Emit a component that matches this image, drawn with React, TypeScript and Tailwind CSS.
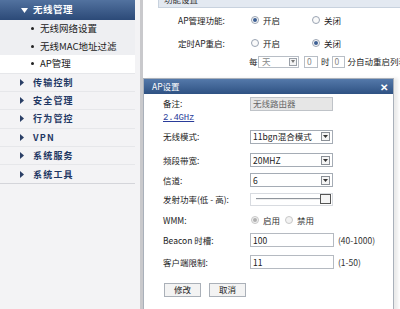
import type { ReactNode } from 'react';

const font = { fontFamily: '"Noto Sans CJK SC", "Liberation Sans", sans-serif' };

function Radio({ checked, dim }: { checked?: boolean; dim?: boolean }) {
  return (
    <span
      className={`inline-flex h-[8px] w-[8px] shrink-0 items-center justify-center rounded-full border ${
        dim ? 'border-[#c8c8c8] bg-[#f2f2f2]' : 'border-[#9aa4b2] bg-[#fafafa]'
      }`}
    >
      {checked && <span className={`h-[4px] w-[4px] rounded-full ${dim ? 'bg-[#b0b0b0]' : 'bg-[#3d5f93]'}`} />}
    </span>
  );
}

function Select({ value }: { value: string }) {
  return (
    <div className="flex h-[14px] w-[83px] items-center justify-between border border-[#a5acb5] bg-white pl-[2px] pr-[2px]">
      <span className="whitespace-nowrap text-[8.5px] leading-none text-[#222]">{value}</span>
      <span className="flex h-[9px] w-[9px] items-center justify-center border border-[#8a8f96] bg-[#f4f4f4]">
        <svg width="5" height="3" viewBox="0 0 5 3">
          <path d="M0 0h5L2.5 3z" fill="#333" />
        </svg>
      </span>
    </div>
  );
}

function Row({ label, className, children }: { label: ReactNode; className: string; children?: ReactNode }) {
  return (
    <div className={`flex h-[15px] items-center ${className}`}>
      <span className="w-[87px] shrink-0 whitespace-nowrap text-[8.5px] leading-none text-[#222]">{label}</span>
      {children}
    </div>
  );
}

const subItems = ['无线网络设置', '无线MAC地址过滤', 'AP管理'];
const menuItems = ['传输控制', '安全管理', '行为管控', 'VPN', '系统服务', '系统工具'];

export default function App() {
  return (
    <div className="relative flex h-[309px] w-[400px] overflow-hidden bg-white" style={font}>
      {/* Sidebar */}
      <aside className="flex w-[143px] shrink-0 flex-col border-r-[3px] border-[#c9c9cc] bg-[#f3f3f5] pr-[5px]">
        <div className="flex h-[20px] items-center bg-gradient-to-b from-[#52729f] to-[#2c4a78] pl-[21px]">
          <svg width="7" height="5" viewBox="0 0 7 5" className="mr-[5px]">
            <path d="M0 0h7L3.5 5z" fill="#fff" />
          </svg>
          <span className="text-[9.5px] font-bold leading-none tracking-[0.5px] text-white">无线管理</span>
        </div>
        <div className="bg-[#eeeff2]">
          {subItems.map((t, i) => (
            <div key={t} className={`flex h-[17.5px] items-center pl-[31px] ${i === 2 ? 'bg-white' : ''}`}>
              <span className="mr-[6px] h-[3px] w-[3px] rounded-full bg-[#222]" />
              <span className="whitespace-nowrap text-[9.5px] leading-none text-[#222]">{t}</span>
            </div>
          ))}
        </div>
        <div className="border-b border-[#d4d5da]">
          {menuItems.map((t) => (
            <div key={t} className="flex h-[18.4px] items-center border-t border-[#e6e7ea] pl-[20px]">
              <svg width="4" height="7" viewBox="0 0 4 7" className="mr-[9px]">
                <path d="M0 0l4 3.5L0 7z" fill="#2a3f66" />
              </svg>
              <span className="text-[9px] font-bold leading-none tracking-[1.2px] text-[#1f3864]">{t}</span>
            </div>
          ))}
        </div>
      </aside>

      {/* Main */}
      <main className="flex flex-1 flex-col">
        <div className="ml-[15px] h-[8px] overflow-hidden border-b border-l border-[#c8d2de] bg-[#e3e9f1] pl-[5px]">
          <span className="-mt-[5px] block text-[8.5px] leading-none text-[#333]">功能设置</span>
        </div>
        <div className="mt-[6px] flex h-[12px] items-center pl-[35px] text-[8.5px] leading-none text-[#222]">
          <span className="w-[73px]">AP管理功能:</span>
          <Radio checked />
          <span className="ml-[4px] w-[49px]">开启</span>
          <Radio />
          <span className="ml-[4px]">关闭</span>
        </div>
        <div className="mt-[11px] flex h-[12px] items-center pl-[35px] text-[8.5px] leading-none text-[#222]">
          <span className="w-[73px]">定时AP重启:</span>
          <Radio />
          <span className="ml-[4px] w-[49px]">开启</span>
          <Radio checked />
          <span className="ml-[4px]">关闭</span>
        </div>
        <div className="mt-[6px] flex h-[13px] items-center whitespace-nowrap pl-[106px] text-[8.5px] leading-none text-[#222]">
          <span className="mr-[1px] w-[8px]">每</span>
          <div className="flex h-[12px] w-[41px] items-center justify-between border border-[#b8bec6] bg-white pl-[3px] pr-[1px]">
            <span className="text-[#888]">天</span>
            <span className="flex h-[8px] w-[8px] items-center justify-center border border-[#9aa0a8] bg-[#f4f4f4]">
              <svg width="4" height="3" viewBox="0 0 4 3">
                <path d="M0 0h4L2 3z" fill="#777" />
              </svg>
            </span>
          </div>
          <span className="ml-[5px] flex h-[12px] w-[14px] items-center border border-[#b8bec6] pl-[2px] text-[#888]">0</span>
          <span className="ml-[3px]">时</span>
          <span className="ml-[2px] flex h-[12px] w-[13px] items-center border border-[#b8bec6] pl-[2px] text-[#888]">0</span>
          <span className="ml-[3px]">分自动重启列表</span>
        </div>
      </main>

      {/* Dialog */}
      <div className="absolute left-[143px] top-[78px] flex h-[240px] w-[251px] flex-col border border-[#a9b0ba] bg-white shadow-[4px_0_3px_rgba(0,0,0,0.08)]">
        <div className="flex h-[15px] shrink-0 items-center justify-between bg-gradient-to-b from-[#5479aa] to-[#2f5283] pl-[8px] pr-[5px]">
          <span className="text-[8.5px] leading-none text-white">AP设置</span>
          <span className="text-[10px] font-bold leading-none text-white">✕</span>
        </div>
        <div className="flex flex-col pl-[19px]">
          <Row label="备注:" className="mt-[2px]">
            <div className="flex h-[14px] w-[83px] items-center border border-[#bfc3c8] bg-[#e6e6e6] pl-[2px] text-[8.5px] leading-none text-[#666]">
              无线路由器
            </div>
          </Row>
          <div className="flex h-[14px] items-center">
            <span
              className="text-[9px] leading-none tracking-[-0.2px] text-[#2a3c9a] underline"
              style={{ fontFamily: '"Liberation Mono", monospace' }}
            >
              2.4GHz
            </span>
          </div>
          <Row label="无线模式:" className="mt-[4px]">
            <Select value="11bgn混合模式" />
          </Row>
          <Row label="频段带宽:" className="mt-[8.5px]">
            <Select value="20MHZ" />
          </Row>
          <Row label="信道:" className="mt-[5px]">
            <Select value="6" />
          </Row>
          <Row label="发射功率(低 - 高):" className="mt-[4px]">
            <div className="flex h-[13px] w-[83px] items-center border border-[#d8dbe0] bg-white pl-[5px] pr-[1px]">
              <span className="h-[2px] flex-1 border-t border-[#8f959c] bg-[#eee]" />
              <span className="h-[10px] w-[11px] border border-[#555] bg-[#f5f5f5]" />
            </div>
          </Row>
          <Row label="WMM:" className="mt-[6px]">
            <span className="ml-[1px] flex items-center text-[8.5px] leading-none text-[#333]">
              <Radio checked dim />
              <span className="ml-[4px] mr-[5px]">启用</span>
              <Radio dim />
              <span className="ml-[4px]">禁用</span>
            </span>
          </Row>
          <Row label="Beacon 时槽:" className="mt-[5px]">
            <div className="flex h-[14px] w-[84px] items-center border border-[#b5bac1] bg-white pl-[2px] text-[8.5px] leading-none text-[#222]">
              100
            </div>
            <span className="ml-[4px] text-[8.5px] leading-none text-[#333]">(40-1000)</span>
          </Row>
          <Row label="客户端限制:" className="mt-[7px]">
            <div className="flex h-[14px] w-[84px] items-center border border-[#b5bac1] bg-white pl-[2px] text-[8.5px] leading-none text-[#222]">
              11
            </div>
            <span className="ml-[4px] text-[8.5px] leading-none text-[#333]">(1-50)</span>
          </Row>
          <div className="mt-[13px] flex gap-[8px] pl-[1px]">
            <button className="flex h-[14px] w-[37px] items-center justify-center border border-[#aab0b8] bg-[#f3f3f3] text-[8.5px] leading-none text-[#222]">
              修改
            </button>
            <button className="flex h-[14px] w-[37px] items-center justify-center border border-[#aab0b8] bg-[#f3f3f3] text-[8.5px] leading-none text-[#222]">
              取消
            </button>
          </div>
        </div>
      </div>
    </div>
  );
}
